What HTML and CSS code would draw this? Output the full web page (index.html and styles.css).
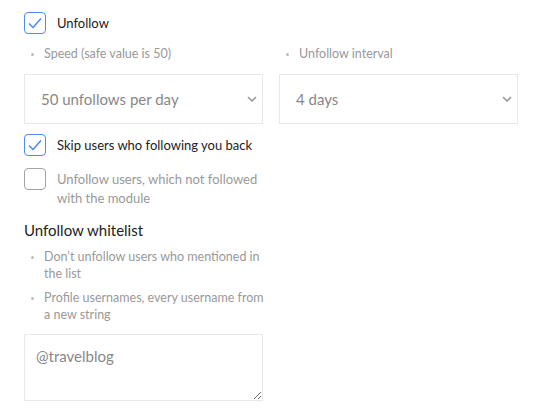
FILE: index.html
```html
<!DOCTYPE html>
<html lang="en">
  <head>
    <meta charset="UTF-8" />
    <meta name="viewport" content="width=device-width, initial-scale=1.0" />
    <title>Unfollow settings</title>
    <link rel="stylesheet" href="styles.css">
  </head>
  <body>
    <div class="settings">
      <label class="check-row">
        <span class="box checked">
          <svg viewBox="0 0 22 22" width="22" height="22"><path d="M5 11.5 L9 15.5 L17 6.5" /></svg>
        </span>
        <span class="check-label">Unfollow</span>
      </label>

      <div class="columns">
        <div class="field">
          <ul class="hints">
            <li>Speed (safe value is 50)</li>
          </ul>
          <div class="select">
            <span>50 unfollows per day</span>
            <svg class="chevron" viewBox="0 0 10 6" width="10" height="6"><path d="M1 1 L5 5 L9 1" /></svg>
          </div>
        </div>
        <div class="field">
          <ul class="hints">
            <li>Unfollow interval</li>
          </ul>
          <div class="select">
            <span>4 days</span>
            <svg class="chevron" viewBox="0 0 10 6" width="10" height="6"><path d="M1 1 L5 5 L9 1" /></svg>
          </div>
        </div>
      </div>

      <div class="half">
        <label class="check-row">
          <span class="box checked">
            <svg viewBox="0 0 22 22" width="22" height="22"><path d="M5 11.5 L9 15.5 L17 6.5" /></svg>
          </span>
          <span class="check-label">Skip users who following you back</span>
        </label>

        <label class="check-row">
          <span class="box"></span>
          <span class="check-label muted">Unfollow users, which not followed with the module</span>
        </label>

        <h3 class="section-title">Unfollow whitelist</h3>
        <ul class="hints whitelist-hints">
          <li>Don't unfollow users who mentioned in the list</li>
          <li>Profile usernames, every username from a new string</li>
        </ul>
        <textarea class="whitelist">@travelblog</textarea>
      </div>
    </div>
  </body>
</html>
```

FILE: styles.css
```css
body {
  margin: 0;
  font-family: Lato, "Open Sans", sans-serif;
  background-color: white;
  color: #222;
}

.settings {
  padding: 12px 16px 0 24px;
}

.check-row {
  display: flex;
  align-items: flex-start;
  gap: 11px;
  cursor: pointer;
}

.box {
  flex: none;
  width: 20px;
  height: 20px;
  border: 1px solid #a3a3a3;
  border-radius: 4px;
  display: flex;
}

.box.checked {
  border-color: #4a8ef0;
}

.box svg {
  margin: -1px;
}

.box path {
  fill: none;
  stroke: #3f86ee;
  stroke-width: 1.4;
}

.check-label {
  font-size: 13px;
  line-height: 19px;
  margin-top: 2px;
}

.check-label.muted {
  color: #999;
}

.columns {
  display: grid;
  grid-template-columns: 1fr 1fr;
  gap: 16px;
  margin-top: 11px;
}

.hints {
  margin: 0;
  padding: 0 0 0 20px;
  font-size: 12.5px;
  line-height: 17px;
  color: #999;
}

.hints li {
  margin-bottom: 7px;
}

.columns .hints li {
  margin-bottom: 12px;
}

.hints li::marker {
  color: #bbb;
  font-size: 9px;
}

.whitelist-hints {
  margin-right: -6px;
}

.select {
  height: 48px;
  border: 1px solid #e8e8e8;
  display: flex;
  align-items: center;
  justify-content: space-between;
  padding: 0 5px 0 16px;
  font-size: 15px;
  color: #888;
}

.chevron path {
  fill: none;
  stroke: #999;
  stroke-width: 1.6;
}

.half {
  width: 239px;
  margin-top: 10px;
  display: flex;
  flex-direction: column;
}

.half .check-row + .check-row {
  margin-top: 12px;
}

.section-title {
  margin: 12px 0 8px;
  font-size: 15px;
  line-height: 20px;
  font-weight: normal;
  color: #222;
}

.whitelist {
  margin-top: 4px;
  border: 1px solid #e8e8e8;
  padding: 12px 11px;
  font-family: inherit;
  font-size: 15px;
  color: #888;
  box-sizing: border-box;
  height: 67px;
  border-radius: 0;
}
```
